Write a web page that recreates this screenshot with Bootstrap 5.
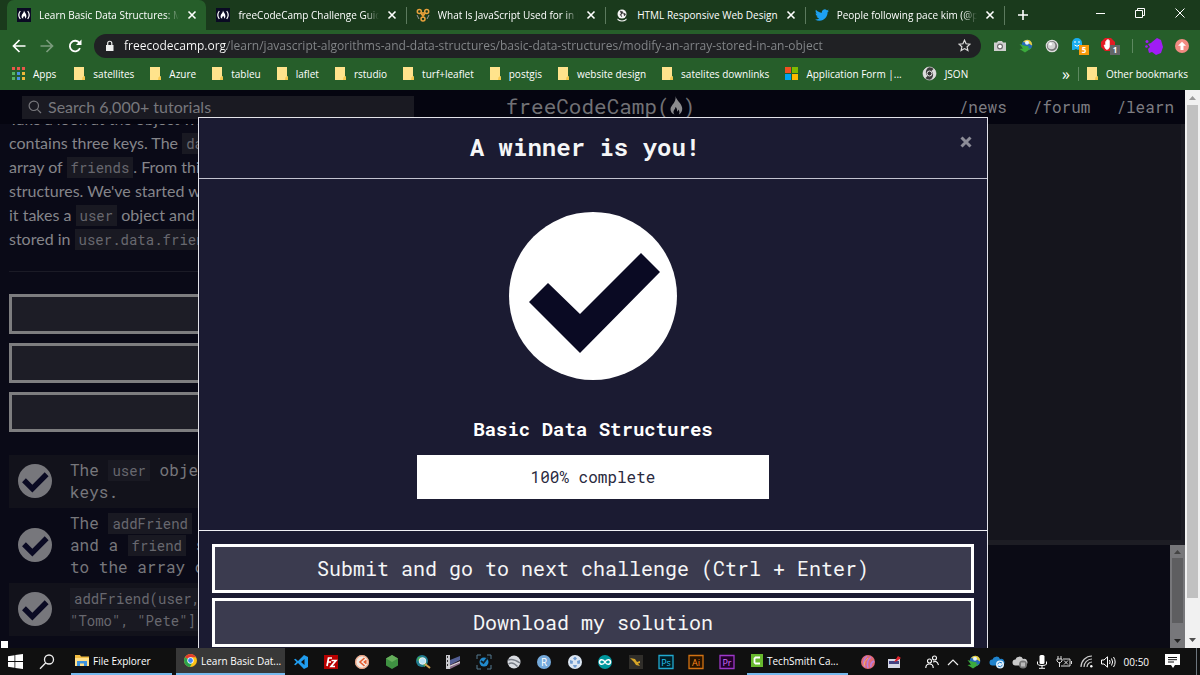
<!DOCTYPE html>
<html lang="en">
<head>
<meta charset="utf-8">
<meta name="viewport" content="width=device-width, initial-scale=1">
<title>Learn Basic Data Structures</title>
<link href="https://cdn.jsdelivr.net/npm/bootstrap@5.3.0/dist/css/bootstrap.min.css" rel="stylesheet">
<style>
:root{--ui:"Open Sans","Noto Sans",sans-serif;--mono:"Roboto Mono","Liberation Mono",monospace}
body{font-family:var(--ui);font-size:10px;line-height:16px;background:#0a0a17;color:#fff}
button{font-family:inherit;color:inherit;background:none;border:0;padding:0}
svg{display:block;flex:none}
.tabstrip{height:30px;background:#1a3a1c}
.tabset{flex:0 1 998px;min-width:0;margin-left:7px}
.tab{flex:1 1 0;min-width:0;gap:8px;padding:0 9px 0 10px;position:relative}
.tab+.tab:not(.first-idle)::before{content:"";position:absolute;left:0;top:7px;height:17px;width:1px;background:#5c7a5e}
.tabset{border-right:1px solid #5c7a5e;border-image:linear-gradient(transparent 7px,#5c7a5e 7px 24px,transparent 24px) 1}
.tab.current{background:#265e2a;border-radius:7px 7px 0 0}
.tab-title{flex:1 1 0;overflow:hidden;white-space:nowrap;-webkit-mask-image:linear-gradient(90deg,#000 90%,transparent)}
.tab.whole .tab-title{-webkit-mask-image:none}
.newtab{margin-left:12px}
.window-btns{gap:28px;padding-right:14px}
.toolbar{height:31px;background:#265e2a;padding-left:12px}
.nav-btns{gap:14px}
.omnibox{height:24px;background:#202124;border-radius:12px;padding:0 10px;margin-left:12px;gap:9px}
.omnibox input{flex:1;min-width:0;border:0;outline:0;padding:0;font-size:12px;color:#9aa0a6;-webkit-text-fill-color:transparent;background:linear-gradient(90deg,#fff 103px,#85888b 103px);-webkit-background-clip:text;background-clip:text}
.ext-row{width:219px;padding:0 11px 0 12px}
.bookmarks{height:29px;background:#265e2a;padding:0 12px 4px 12px}
.bm{color:#fff;text-decoration:none;white-space:nowrap;gap:8px;margin-right:16px}
.bm-apps{margin-right:18px}
.vline{width:1px;height:14px;background:#5d8960}
.pagearea{background:#0a0a17;min-height:0}
.sitebar{height:34px;background:#050510;padding:0 11px 0 22px;color:#7d7d82}
.searchbox{width:34%;height:23px;background:#1a1a22;gap:6px;padding:0 6px}
.searchbox input{border:0;outline:0;background:none;font:16px/22px Lato,sans-serif;color:#85858a;padding:0;width:100%}
.searchbox input::placeholder{color:#77777c;opacity:1}
.wordmark{font:21px/30px var(--mono);color:#717175;margin-left:8%;padding-bottom:3px}
.site-links{gap:26px}
.sitebar a{color:#7d7d82;text-decoration:none;font:16px/24px var(--mono)}
.lesson{flex:0 0 34%;overflow:hidden;padding:0 9px;background:#0a0a17}
.lesson-text{font:16px/24px Lato,sans-serif;color:#85858a;white-space:nowrap;margin:-17px 0 20px}
.lesson code,.tests code{font:14px/20px var(--mono);color:#68686f;background:#191922;padding:1px 4px}
.rule{height:1px;background:#1b1b26;margin-bottom:22px}
.ghost-btn{height:40px;border:3px solid #7d7d7f;background:#1d1d26;width:100%;display:block;margin-bottom:9px}
.tests{font:16px/22px var(--mono);color:#77777c;white-space:nowrap;margin-top:23px}
.test-row{padding:4px 9px 5px;gap:18px}
.test-row:nth-child(odd){background:#12121b}
.editor{background:#15151d;border-right:4px solid #1b1b23;border-bottom:5px solid #1d1d24}
.console{height:103px;background:#0b0b15}
.pane-scroll{width:15px;background:#77777a}
.pane-thumb{width:11px;background:#5e5e60}
.page-scroll{width:15px;background:#f1f1f1;padding:5px 2px}
.scroll-thumb{background:#c1c1c1;margin-top:5px;width:100%;height:90%}
.veil{position:absolute;inset:27px 14px 0 0}
.winner{width:790px;max-width:96%;height:100%;background:#1b1b32;border:1px solid #e3e3ea;border-bottom:0;color:#f5f6f7;font-family:var(--mono)}
.winner-head{height:61px;border-bottom:1px solid #c3c3d0;position:relative}
.winner h1{font-size:24px;line-height:32px;font-weight:700;margin:0 16px 2px 0}
.close-x{position:absolute;right:15px;top:18px}
.winner-body{height:352px;border-bottom:1px solid #f0f0f5;padding-top:33px;color:#fff}
.winner h2{font-size:19px;line-height:28px;font-weight:700;margin:35px 0 12px}
.meter{width:352px;max-width:90%;height:44px;background:#fff;color:#2a2a40;font-size:16px;line-height:44px;text-align:center}
.winner-foot{padding:13px;gap:5px}
.big-btn{height:49px;border:3px solid #fff;background:#3b3b4f;font-size:20px;line-height:28px;color:#f5f6f7;padding-bottom:2px}
.handle{position:absolute;left:1px;bottom:0;width:7px;height:7px;background:#fff}
.taskbar{height:27px;background:#101010}
.task{height:27px;width:101px;gap:4px;border-bottom:2px solid #76b9ed;white-space:nowrap}
.task.on{background:#383838;width:109px}
.app-row{flex:0 0 442px}
.after-apps{margin-left:12px}
.desk-edge{width:4px}
</style>
</head>
<body class="vh-100 d-flex flex-column overflow-hidden">
<svg width="0" height="0" class="position-absolute" aria-hidden="true">
<defs>
<symbol id="fcc" viewBox="0 0 14 14"><path fill="#0a0a23" d="M0 0h14v14H0z"/><path d="M3.300 3Q.3 7 3.300 11M10.700 3q3 4 0 8" fill="none" stroke="#fff" stroke-width="1.200"/><path d="M7 2.600c.4 2 2.400 3 2.400 5.400 0 1.300-.6 2.300-1.500 2.800.5-1.100.2-2-.8-3-.5 1-1.500 1.700-.8 3-1.200-.5-1.900-1.500-1.700-2.800C4.800 6 6.900 5.500 7 2.600z" fill="#fff"/></symbol>
<symbol id="x" viewBox="0 0 10 10"><path d="M1.500 1.500l7 7m0-7l-7 7" stroke="#fff" stroke-width="1.600"/></symbol>
<symbol id="folder" viewBox="0 0 11 13"><path d="M0 0h10v9l1 1v3H0z" fill="#ffe38c"/><path d="M8.500 10.500L10 9l1 1v3H8z" fill="#f6c84e"/></symbol>
<symbol id="pass" viewBox="0 0 168 168"><circle cx="84" cy="84" r="84" fill="currentColor"/><path d="M20 90l19-19 32 31 61-61 19 19-80 81z" fill="#0a0a23"/></symbol>
<symbol id="idm" viewBox="0 0 14 14"><circle cx="8" cy="6" r="5.300" fill="#246bb8"/><path d="M4 3Q7-.5 11 1.500q2.500 2 2 5L9 4z" fill="#e9cf3c"/><circle cx="8" cy="3.800" r="2" fill="#e4f3ff"/><path d="M.5 5l4.500 1.500 5 1-1 2 3.500-.5-6.500 4.500L.5 10l3.500-.5z" fill="#3cab3c"/></symbol>
<symbol id="cloud" viewBox="0 0 16 14"><path d="M3.500 10.500a3 3 0 010-6A4 4 0 0111 4a3.300 3.300 0 012 6.500z" fill="currentColor"/></symbol>
</defs></svg>

<header>
<div class="tabstrip d-flex">
 <div class="tabset d-flex">
  <div class="tab current d-flex align-items-center"><svg width="14" height="14"><use href="#fcc"/></svg><span class="tab-title">Learn Basic Data Structures: Mo</span><button aria-label="Close tab"><svg width="10" height="10"><use href="#x"/></svg></button></div>
  <div class="tab first-idle d-flex align-items-center"><svg width="14" height="14"><use href="#fcc"/></svg><span class="tab-title">freeCodeCamp Challenge Guide</span><button aria-label="Close tab"><svg width="10" height="10"><use href="#x"/></svg></button></div>
  <div class="tab d-flex align-items-center"><svg width="14" height="14" viewBox="0 0 14 14" fill="none" stroke="#e9a23b" stroke-width="1.500"><path d="M4 5l3 2 3-2M7 7v3" stroke="#b87b2c"/><circle cx="3.300" cy="3.500" r="2"/><circle cx="10.700" cy="3.500" r="2"/><circle cx="7" cy="11" r="2"/><circle cx="7" cy="6" r="1.300"/><path d="M1 7l2 4M13 7l-2 4" stroke="#999" stroke-width="1"/></svg><span class="tab-title">What Is JavaScript Used for in D</span><button aria-label="Close tab"><svg width="10" height="10"><use href="#x"/></svg></button></div>
  <div class="tab whole d-flex align-items-center"><svg width="14" height="14" viewBox="0 0 14 14"><circle cx="7" cy="6" r="4.500" fill="#f5f5f5"/><path d="M5 3l3 1-1 2-2 .5 2 2.500M8.500 5l2 1-1 2z" fill="#333" stroke="#333" stroke-width=".6"/><path d="M2.500 10.500q4.500 4 9 0v1.500q-4.500 3-9 0z" fill="#f5f5f5"/></svg><span class="tab-title">HTML Responsive Web Design</span><button aria-label="Close tab"><svg width="10" height="10"><use href="#x"/></svg></button></div>
  <div class="tab d-flex align-items-center"><svg width="14" height="14" viewBox="0 0 24 24"><path fill="#1da1f2" d="M23.950 4.570a10 10 0 01-2.820.770 4.960 4.960 0 002.160-2.720 9.900 9.900 0 01-3.120 1.180 4.920 4.920 0 00-8.380 4.480C7.690 8.090 4.070 6.130 1.640 3.160a4.820 4.820 0 00-.67 2.480 4.920 4.920 0 002.190 4.100 4.900 4.900 0 01-2.230-.620v.060a4.920 4.920 0 003.950 4.830 5 5 0 01-2.210.080 4.940 4.940 0 004.600 3.420A9.870 9.870 0 010 19.540a14 14 0 007.550 2.210c9.050 0 14-7.500 14-13.980l-.020-.630a9.900 9.900 0 002.420-2.570z"/></svg><span class="tab-title">People following pace kim (@p</span><button aria-label="Close tab"><svg width="10" height="10"><use href="#x"/></svg></button></div>
 </div>
 <button aria-label="New tab" class="newtab me-auto"><svg width="12" height="12" viewBox="0 0 12 12"><path d="M6 1v10M1 6h10" stroke="#fff" stroke-width="1.600"/></svg></button>
 <div class="window-btns d-flex align-items-center pb-1">
  <button aria-label="Minimize"><svg width="12" height="12" viewBox="0 0 12 12"><path d="M2 6.500h9" stroke="#fff"/></svg></button>
  <button aria-label="Restore"><svg width="12" height="12" viewBox="0 0 12 12" fill="none" stroke="#fff"><path d="M1.500 3.500h7v7h-7zM3.500 3.500v-2h7v7h-2"/></svg></button>
  <button aria-label="Close"><svg width="12" height="12" viewBox="0 0 12 12"><path d="M1.500 1.500l9 9m0-9l-9 9" stroke="#fff"/></svg></button>
 </div>
</div>
<div class="toolbar d-flex align-items-center">
 <div class="nav-btns d-flex">
  <button aria-label="Back"><svg width="14" height="14" viewBox="0 0 14 14" fill="none" stroke="#fff" stroke-width="1.700"><path d="M13.500 7H2m5.500-6l-6 6 6 6"/></svg></button>
  <button aria-label="Forward"><svg width="14" height="14" viewBox="0 0 14 14" fill="none" stroke="#7b9c7d" stroke-width="1.700"><path d="M.5 7H12M6.500 1l6 6-6 6"/></svg></button>
  <button aria-label="Reload"><svg width="14" height="14" viewBox="0 0 14 14" fill="none" stroke="#fff" stroke-width="1.800"><path d="M12 9.200A5.300 5.300 0 1111.500 4"/><path d="M13.500.5v5.500H8z" fill="#fff" stroke="none"/></svg></button>
 </div>
 <div class="omnibox d-flex align-items-center flex-grow-1">
  <svg width="11" height="12" viewBox="0 0 11 12"><path d="M2 5h7.500v6H2z" fill="#eee"/><path d="M3.700 5V3.300a2 2 0 014.100 0V5" fill="none" stroke="#eee" stroke-width="1.200"/></svg>
  <input aria-label="Address" value="freecodecamp.org/learn/javascript-algorithms-and-data-structures/basic-data-structures/modify-an-array-stored-in-an-object">
  <button aria-label="Bookmark this page"><svg width="13" height="13" viewBox="0 0 13 13" fill="none" stroke="#ddd" stroke-width="1.200"><path d="M6.500 1.200L8.100 4.800l3.900.4-2.900 2.600.8 3.800-3.400-2-3.400 2 .8-3.800L1 5.200l3.900-.4z"/></svg></button>
 </div>
 <div class="ext-row d-flex align-items-center justify-content-between">
  <svg width="14" height="14" viewBox="0 0 14 14"><path d="M1 3.500h3l1-1.500h4l1 1.500h3v8.500H1z" fill="#cfcfcf"/><circle cx="7" cy="7.500" r="3" fill="#6c6c6c"/><circle cx="7" cy="7.500" r="1.800" fill="#fff"/></svg>
  <svg width="14" height="14"><use href="#idm"/></svg>
  <svg width="14" height="14" viewBox="0 0 14 14"><circle cx="7" cy="7" r="5.700" fill="#777" stroke="#ddd" stroke-width="1.200"/><circle cx="6.500" cy="6.500" r="3.800" fill="#d4d4d4"/><circle cx="5.500" cy="5" r="1.500" fill="#fff"/></svg>
  <svg width="18" height="20" viewBox="0 0 18 20"><path d="M1 14V7a5 5 0 0110 0v7l-2-1-2 1-2-1-2 1z" fill="#19aef0"/><path d="M4 5v2M8 5v2M3.500 9q2.500 2.500 5 0" stroke="#fff" fill="none"/><path fill="#f79a0b" d="M8 9h10v10H8z"/><text x="13" y="17" font-size="8" font-weight="700" text-anchor="middle" fill="#fff">5</text></svg>
  <svg width="20" height="20" viewBox="0 0 20 20"><path d="M5 2h6l4 4v5l-4 4H5l-4-4V6z" fill="#e31b23"/><path d="M5.500 9V5.500h1V8 4h1v4-4.500h1V8 4.500h1V11q-1 3-3 2.500Q5 13 4 9z" fill="#fff" stroke="#fff" stroke-width=".5"/><path fill="#636568" d="M10 9h10v10H10z"/><text x="15" y="17" font-size="8" font-weight="700" text-anchor="middle" fill="#fff">1</text></svg>
  <span class="vline"></span>
  <svg width="18" height="18" viewBox="0 0 18 18" fill="#a01cf5"><path d="M7 5l5-4 4 2 2 7-2 6-5 2-4-3-3 1-1-4 2-2-2-3 3-1z"/><circle cx="2" cy="4.500" r="1.500"/><circle cx="1.500" cy="9.500" r="1.300"/></svg>
  <svg width="14" height="14" viewBox="0 0 14 14"><circle cx="7" cy="7" r="7" fill="#f28b82"/><path d="M7 2.800l4 4H8.500V11h-3V6.800H3z" fill="#fff"/></svg>
 </div>
</div>
<nav class="bookmarks d-flex align-items-center" aria-label="Bookmarks">
 <a class="bm bm-apps d-flex align-items-center" href="#"><svg width="13" height="13" viewBox="0 0 13 13"><path d="M0 0h3v3H0zM5 0h3v3H5zM10 0h3v3h-3z" fill="#e8584b"/><path d="M0 5h3v3H0zM0 10h3v3H0z" fill="#55b463"/><path d="M5 5h3v3H5zM5 10h3v3H5z" fill="#4a90e2"/><path d="M10 5h3v3h-3zM10 10h3v3h-3z" fill="#f0b93a"/></svg>Apps</a>
 <a class="bm d-flex align-items-center" href="#"><svg width="11" height="13"><use href="#folder"/></svg>satellites</a>
 <a class="bm d-flex align-items-center" href="#"><svg width="11" height="13"><use href="#folder"/></svg>Azure</a>
 <a class="bm d-flex align-items-center" href="#"><svg width="11" height="13"><use href="#folder"/></svg>tableu</a>
 <a class="bm d-flex align-items-center" href="#"><svg width="11" height="13"><use href="#folder"/></svg>laflet</a>
 <a class="bm d-flex align-items-center" href="#"><svg width="11" height="13"><use href="#folder"/></svg>rstudio</a>
 <a class="bm d-flex align-items-center" href="#"><svg width="11" height="13"><use href="#folder"/></svg>turf+leaflet</a>
 <a class="bm d-flex align-items-center" href="#"><svg width="11" height="13"><use href="#folder"/></svg>postgis</a>
 <a class="bm d-flex align-items-center" href="#"><svg width="11" height="13"><use href="#folder"/></svg>website design</a>
 <a class="bm d-flex align-items-center" href="#"><svg width="11" height="13"><use href="#folder"/></svg>satelites downlinks</a>
 <a class="bm d-flex align-items-center" href="#"><svg width="13" height="13" viewBox="0 0 13 13"><path fill="#f25022" d="M0 0h6v6H0z"/><path fill="#7fba00" d="M7 0h6v6H7z"/><path fill="#00a4ef" d="M0 7h6v6H0z"/><path fill="#ffb900" d="M7 7h6v6H7z"/></svg>Application Form |...</a>
 <a class="bm d-flex align-items-center ms-1" href="#"><svg width="15" height="15" viewBox="0 0 15 15"><circle cx="7.500" cy="7.500" r="6.500" fill="#3c3c3c" stroke="#aaa"/><path d="M3 12.500C-1 8 1 2 7 1 4 3 2.500 7 5.500 10zM12 2.500c4 4.500 2 10.500-4 11.500 3-2 4.500-6 1.500-9z" fill="#ddd"/><circle cx="7.500" cy="7.500" r="2.500" fill="#333" stroke="#eee"/></svg>JSON</a>
 <button class="ms-auto me-2 fs-6" aria-label="More bookmarks">»</button><span class="vline me-2"></span>
 <a class="bm d-flex align-items-center me-0" href="#"><svg width="11" height="13"><use href="#folder"/></svg>Other bookmarks</a>
</nav>
</header>

<main class="pagearea flex-grow-1 d-flex position-relative overflow-hidden">
 <div class="flex-grow-1 d-flex flex-column overflow-hidden">
  <nav class="sitebar d-flex align-items-center" aria-label="Site">
   <label class="searchbox d-flex align-items-center"><svg width="14" height="14" viewBox="0 0 14 14" fill="none" stroke="#77777c" stroke-width="1.200"><circle cx="5.800" cy="5.800" r="4.700"/><path d="M9.300 9.300L13 13"/></svg><input type="text" placeholder="Search 6,000+ tutorials" aria-label="Search tutorials"></label>
   <div class="wordmark d-flex align-items-center">freeCodeCamp(<svg width="13" height="19" viewBox="0 0 13 19"><path fill="#8b8b8e" d="M5.500 0C6 4 11.500 7 12.200 12c.3 3-1.200 5.400-3.400 6.500 1-1.700.8-3.500-.5-5-.1 1.300-.6 1.800-1.300 2 .5-2-.3-3.500-1.500-4.500 0 2-2.500 3.500-2 5.500.1.900.5 1.600 1.100 2C2 18 .3 15.500.5 13 .8 9 6.500 6.500 5.500 0z"/></svg>)</div>
   <div class="site-links d-flex ms-auto"><a href="#">/news</a><a href="#">/forum</a><a href="#">/learn</a></div>
  </nav>
  <div class="flex-grow-1 d-flex overflow-hidden">
   <section class="lesson">
    <p class="lesson-text">Take a look at the object we've<br>contains three keys. The <code>data</code><br>array of <code>friends</code>. From this<br>structures. We've started writing<br>it takes a <code>user</code> object and a<br>stored in <code>user.data.friends</code></p>
    <div class="rule"></div>
    <button class="ghost-btn" aria-label="Run the tests"></button>
    <button class="ghost-btn" aria-label="Reset all code"></button>
    <button class="ghost-btn" aria-label="Get help"></button>
    <div class="tests">
     <div class="test-row d-flex align-items-center"><svg width="34" height="34"><use href="#pass"/></svg><span>The <code>user</code> object<br>keys.</span></div>
     <div class="test-row d-flex align-items-center"><svg width="34" height="34"><use href="#pass"/></svg><span>The <code>addFriend</code><br>and a <code>friend</code> string<br>to the array of</span></div>
     <div class="test-row d-flex align-items-center"><svg width="34" height="34"><use href="#pass"/></svg><span><code>addFriend(user,</code><br><code class="ps-0">"Tomo", "Pete"]</code></span></div>
    </div>
   </section>
   <section class="flex-grow-1 d-flex flex-column">
    <div class="editor flex-grow-1"></div>
    <div class="console d-flex justify-content-end"><div class="pane-scroll d-flex flex-column align-items-center justify-content-between py-1"><svg width="7" height="5"><path d="M0 5l3.500-4L7 5z" fill="#444"/></svg><div class="pane-thumb flex-grow-1 mt-1 mb-3"></div><svg width="7" height="5"><path d="M0 0l3.500 4L7 0z" fill="#222"/></svg></div></div>
   </section>
  </div>
 </div>
 <div class="page-scroll d-flex flex-column align-items-center"><svg width="7" height="5"><path d="M0 5l3.500-4L7 5z" fill="#999"/></svg><div class="scroll-thumb"></div><svg class="mt-auto" width="7" height="5"><path d="M0 0l3.500 4L7 0z" fill="#505050"/></svg></div>

 <div class="veil d-flex justify-content-center">
  <div class="winner" role="dialog" aria-labelledby="winner-title">
   <div class="winner-head d-flex align-items-center justify-content-center"><h1 id="winner-title">A winner is you!</h1><button class="close-x" aria-label="Close dialog"><svg width="12" height="12" viewBox="0 0 12 12"><path d="M1.500 1.500l9 9m0-9l-9 9" stroke="#8d8d98" stroke-width="3"/></svg></button></div>
   <div class="winner-body d-flex flex-column align-items-center"><svg width="168" height="168"><use href="#pass"/></svg><h2>Basic Data Structures</h2><div class="meter" role="progressbar" aria-label="Challenge progress" aria-valuenow="100" aria-valuemin="0" aria-valuemax="100">100% complete</div></div>
   <div class="winner-foot d-flex flex-column"><button class="big-btn">Submit and go to next challenge (Ctrl + Enter)</button><button class="big-btn">Download my solution</button></div>
  </div>
 </div>
 <span class="handle"></span>
</main>

<footer class="taskbar d-flex align-items-center">
 <button aria-label="Start" class="ms-2"><svg width="15" height="15" viewBox="0 0 15 15" fill="#fff"><path d="M0 2.200l6.500-1v5.900H0zM7.300 1.100L15 0v7.100H7.300zM0 7.900h6.500v5.900L0 12.800zM7.300 7.900H15V15l-7.700-1.100z"/></svg></button>
 <button aria-label="Search" class="ms-3"><svg width="16" height="16" viewBox="0 0 16 16" fill="none" stroke="#eee" stroke-width="1.300"><circle cx="10" cy="5.500" r="4.500"/><path d="M6.800 8.800L1 14.800"/></svg></button>
 <button class="task d-flex align-items-center ms-3 px-1"><svg width="14" height="14" viewBox="0 0 14 14"><path d="M0 1h5l1 1.500h8V12H0z" fill="#f2bd42"/><path d="M0 4h14v8H0z" fill="#ffe08a"/><path d="M2 7h10v5H9V9.500H5V12H2z" fill="#3f93dc"/></svg>File Explorer</button>
 <button class="task on d-flex align-items-center ms-1 px-1"><svg class="ms-1" width="13" height="13" viewBox="0 0 14 14"><circle cx="7" cy="7" r="7" fill="#fbc116"/><path d="M7 7L1 3.500A7 7 0 0113 3.500H7z" fill="#e33b2e"/><path d="M1 3.500A7 7 0 006.500 14L9 9 7 7z" fill="#2ba24c"/><circle cx="7" cy="7" r="3.400" fill="#fff"/><circle cx="7" cy="7" r="2.600" fill="#4285f4"/></svg>Learn Basic Dat...</button>
 <div class="app-row d-flex align-items-center justify-content-between ms-2">
  <svg width="16" height="16" viewBox="0 0 16 16"><path d="M11 1l4 2v10l-4 2-6-6-2.500 2.300L1 10.500 3.500 8 1 5.500l1.500-.8L5 7zM11.500 5L8 8l3.500 3z" fill="#209cee" fill-rule="evenodd"/></svg>
  <svg width="16" height="16" viewBox="0 0 16 16"><path fill="#b80000" d="M1 1h14v14H1z"/><path d="M4 12l1.500-8H9M4.700 8H8M8.500 6.500H13L8 12.500h4" fill="none" stroke="#fff" stroke-width="1.700"/></svg>
  <svg width="16" height="16" viewBox="0 0 16 16"><circle cx="8" cy="8" r="7" fill="#f3e9e2"/><path d="M10.500 4L6 8l4.500 4M12.500 6.500L10.500 8l2 1.500" fill="none" stroke="#e35b2e" stroke-width="1.600"/><circle cx="8" cy="8" r="6.300" fill="none" stroke="#ef8a5f"/></svg>
  <svg width="16" height="16" viewBox="0 0 16 16"><path d="M8 1l6 3.500v7L8 15l-6-3.500v-7z" fill="#3f9142"/><path d="M8 1l6 3.500L8 8 2 4.500z" fill="#65ad5b"/></svg>
  <svg width="16" height="16" viewBox="0 0 16 16"><circle cx="7" cy="7" r="6" fill="#207d91"/><path d="M3 3h4l-2 3-3 1zM8 9l3-1 1 3-3 2z" fill="#42a95b"/><circle cx="7.500" cy="7" r="3.300" fill="#b6e3f4" stroke="#eee"/><path d="M10 10l5 4" stroke="#d0a151" stroke-width="2"/></svg>
  <svg width="16" height="16" viewBox="0 0 16 16"><path fill="#c9c9cf" d="M1 1h4v14H1z"/><path d="M5 6l10-4v4L5 11z" fill="#546096"/><path d="M5 11l10-4v3L5 15z" fill="#8b6f8a"/><path d="M3 13l12-5" stroke="#ddd"/><path d="M2.500 2v12" stroke="#333" stroke-dasharray="2 2"/></svg>
  <svg width="16" height="16" viewBox="0 0 16 16"><path d="M1 5V1h4M11 1h4v4M15 11v4h-4M5 15H1v-4" stroke="#557a91" fill="none"/><circle cx="8" cy="8" r="4.500" fill="#218bce"/><path d="M5 7l2.500 2L12 3" stroke="#14232c" stroke-width="1.800" fill="none"/></svg>
  <svg width="16" height="16" viewBox="0 0 16 16"><circle cx="8" cy="8" r="6.500" fill="#d9dce1"/><path d="M2 6q5-2 12 3M2.500 10q4-3 9 2.500" stroke="#777d86" stroke-width="1.500" fill="none"/></svg>
  <svg width="16" height="16" viewBox="0 0 16 16"><circle cx="8" cy="8" r="7" fill="#75aadb"/><text x="8" y="11.500" font-size="10" text-anchor="middle" fill="#fff">R</text></svg>
  <svg width="16" height="16" viewBox="0 0 16 16"><circle cx="8" cy="8" r="7" fill="#dce6f2"/><g fill="#6f9bd0"><path d="M8 2.500l2 2-2 2-2-2zM3 6l3 1-.5 3L3 9.500zM13 6l-3 1 .5 3L13 9.500zM6 11h4l-1 2.500H7z"/></g></svg>
  <svg width="16" height="16" viewBox="0 0 16 16"><circle cx="8" cy="8" r="7" fill="#00979d"/><path d="M8 8C6 4.500 2.500 5.500 2.500 8S6 11.500 8 8s5.500-2.500 5.500 0S10 11.500 8 8z" fill="none" stroke="#fff" stroke-width="1.500"/></svg>
  <svg width="16" height="16" viewBox="0 0 16 16"><path fill="#302e2a" d="M1 1h14v14H1z"/><path d="M2 4l5 1 2 3 3-1v2l-2 .5 2 2.500-4-1-2-3z" fill="#d6a526"/></svg>
  <svg width="16" height="16" viewBox="0 0 16 16"><path fill="#001d26" stroke="#20a9cf" stroke-width="1.300" d="M1 1.500h14v13H1z"/><text x="8" y="11.500" font-size="9" text-anchor="middle" fill="#25c4f2">Ps</text></svg>
  <svg width="16" height="16" viewBox="0 0 16 16"><path fill="#261300" stroke="#d27212" stroke-width="1.300" d="M1 1.500h14v13H1z"/><text x="8" y="11.500" font-size="9" text-anchor="middle" fill="#ff8a1c">Ai</text></svg>
  <svg width="16" height="16" viewBox="0 0 16 16"><path fill="#22002b" stroke="#9e36c9" stroke-width="1.300" d="M1 1.500h14v13H1z"/><text x="8" y="11.500" font-size="9" text-anchor="middle" fill="#d672ff">Pr</text></svg>
 </div>
 <button class="task after-apps d-flex align-items-center px-1"><svg width="12" height="13" viewBox="0 0 12 13"><path fill="#67b82e" d="M0 0h12v13H0z"/><path d="M9 3.500H4.500l-1 1v4l1 1H9" fill="none" stroke="#fff" stroke-width="1.800"/></svg>TechSmith Ca...</button>
 <svg class="after-apps" width="16" height="16" viewBox="0 0 16 16"><circle cx="8" cy="8" r="7" fill="#e26a76"/><path d="M5 13Q2 6 7 2M8 14Q6 7 11 3M11 13q-1-4 3-6" stroke="#b77fe0" stroke-width="1.500" fill="none"/><path d="M4 12q0-5 4-8" stroke="#ffad5c" fill="none"/></svg>
 <svg class="after-apps" width="13" height="13" viewBox="0 0 13 13"><path fill="#d5d7e4" d="M0 4h12v9H0z"/><path fill="#434383" d="M1 6h10v3H1z"/><path d="M6 7l4-6 3 2-4 3z" fill="#e0252e"/></svg>
 <div class="d-flex align-items-center justify-content-between flex-grow-1 ps-4 pe-3">
  <svg width="14" height="14" viewBox="0 0 14 14" fill="none" stroke="#fff" stroke-width="1.100"><circle cx="4.500" cy="6" r="2"/><path d="M.8 13q0-4 3.700-4t3.700 4"/><circle cx="9.500" cy="3" r="2"/><path d="M8 7q4-2 5.500 3"/></svg>
  <svg width="12" height="12" viewBox="0 0 12 12"><path d="M1 9l5-5 5 5" fill="none" stroke="#eee" stroke-width="1.200"/></svg>
  <svg width="14" height="14"><use href="#idm"/></svg>
  <svg width="16" height="14" viewBox="0 0 16 14" color="#1f83cd"><use href="#cloud" width="16" height="14"/><circle cx="11" cy="9.500" r="4" fill="#def1ff"/><path d="M8.500 9q2-3 4.500-1M13.500 10q-2 3-4.500 1" stroke="#1976c5" fill="none"/></svg>
  <svg width="16" height="14" viewBox="0 0 16 14" color="#c9c9c9"><use href="#cloud" width="16" height="14"/><circle cx="11" cy="9.500" r="4" fill="#777"/><path d="M10 7.500v4M12 7.500v4" stroke="#fff"/></svg>
  <svg width="12" height="14" viewBox="0 0 12 14"><rect x="3.500" y="0" width="5" height="9" rx="1.500" fill="#fff"/><path d="M1.500 6.500V9q0 1.500 4.500 1.500T10.500 9V6.500M6 10v3M3 13.300h6" fill="none" stroke="#fff"/></svg>
  <svg width="16" height="12" viewBox="0 0 16 12" fill="none" stroke="#ddd"><path d="M7 3h7v7H5M2 0v3M5 0v3M1 3h5v2L4.500 6.500h-2L1 5zM3.500 7v4M8 4.500l4 4m0-4l-4 4M15.500 5v3"/></svg>
  <svg width="13" height="13" viewBox="0 0 13 13" fill="none" stroke="#ccc" stroke-width="1.200"><path d="M1 12A11 11 0 0112 1M4 12a8 8 0 018-8M7 12a5 5 0 015-5"/><circle cx="11.300" cy="11.300" r="1.200" fill="#fff" stroke="none"/></svg>
  <svg width="15" height="12" viewBox="0 0 15 12" fill="none" stroke="#fff"><path d="M.5 4h2.500L6.500.8v10.400L3 8H.5zM8.500 4q1.200 2 0 4M10.500 2.500q2.300 3.500 0 7M12.500 1q3.300 5 0 10"/></svg>
  <span>00:50</span>
  <svg class="ms-2" width="15" height="15" viewBox="0 0 15 15"><path d="M0 0h15v11H10l-2 3-2-3H0z" fill="#fff"/><path d="M3 3.500h9M3 5.700h9M3 8h6" stroke="#111"/></svg>
 </div>
 <span class="desk-edge border-start border-secondary h-100"></span>
</footer>
<script src="https://cdn.jsdelivr.net/npm/bootstrap@5.3.0/dist/js/bootstrap.bundle.min.js"></script>
</body>
</html>
